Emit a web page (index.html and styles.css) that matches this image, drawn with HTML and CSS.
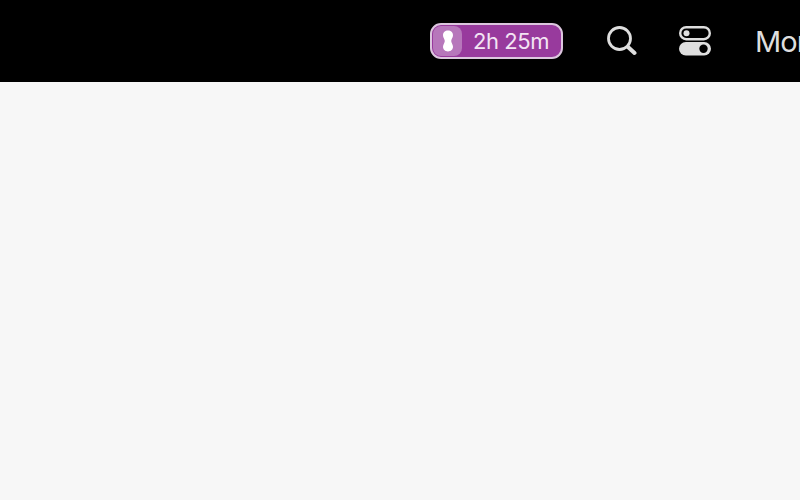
FILE: index.html
```html
<!DOCTYPE html>
<html lang="en">
<head>
	<meta charset="UTF-8">
	<title>Document</title>
	<link rel="stylesheet" href="styles.css">
</head>
<body>
	<div class="hdr">
		<div class="pill">
			<span class="pill-ic">
				<svg width="12" height="22" viewBox="0 0 12 22">
					<path fill="#fff" d="M6,0.5C8.9,0.5 11,2.6 11,5.2C11,7.6 9.2,9.2 9.2,11C9.2,12.8 11,14.4 11,16.8C11,19.4 8.9,21.5 6,21.5C3.1,21.5 1,19.4 1,16.8C1,14.4 2.8,12.8 2.8,11C2.8,9.2 1,7.6 1,5.2C1,2.6 3.1,0.5 6,0.5Z"/>
				</svg>
			</span>
			<span class="pill-txt">2h 25m</span>
		</div>
		<svg class="ic-search" width="30" height="30" viewBox="0 0 30 30">
			<circle cx="12.5" cy="12.5" r="11" fill="none" stroke="#dedede" stroke-width="2.8"/>
			<line x1="21" y1="21" x2="27.5" y2="27" stroke="#dedede" stroke-width="4" stroke-linecap="round"/>
		</svg>
		<svg class="ic-toggle" width="32" height="30" viewBox="0 0 32 30">
			<rect x="1.2" y="1.2" width="29.6" height="12" rx="6" fill="none" stroke="#dedede" stroke-width="2.4"/>
			<circle cx="7.5" cy="7.2" r="3" fill="#dedede"/>
			<rect x="0" y="16" width="32" height="13.6" rx="6.8" fill="#dedede"/>
			<circle cx="24.5" cy="22.8" r="4.2" fill="#000"/>
		</svg>
		<span class="more">More</span>
	</div>
	<div class="main"></div>
</body>
</html>
```
FILE: styles.css
```css
html,body{
	width: 100%;
	height: 100%;
	padding: 0px;
	margin: 0px;
	overflow: hidden;
	font-family: Inter, "Liberation Sans", sans-serif;
}
body{
	display: flex;
	flex-direction: column;
	background: #f7f7f7;
}
.hdr{
	background: #000;
	height: 82px;
	display: flex;
	align-items: center;
	padding-left: 430px;
	white-space: nowrap;
	overflow: hidden;
	flex-shrink: 0;
}
.pill{
	box-sizing: border-box;
	width: 133px;
	height: 36px;
	background: #983a9d;
	border: 2px solid #dcc6de;
	border-radius: 11px;
	display: flex;
	align-items: center;
	flex-shrink: 0;
}
.pill-ic{
	width: 29px;
	height: 30px;
	margin-left: 1px;
	background: #b777bb;
	border-radius: 8px;
	display: flex;
	align-items: center;
	justify-content: center;
}
.pill-txt{
	margin-left: 11px;
	color: #f3e4f4;
	font-size: 22px;
	letter-spacing: -0.45px;
}
.ic-search{
	margin-left: 44px;
	flex-shrink: 0;
}
.ic-toggle{
	margin-left: 42px;
	flex-shrink: 0;
}
.more{
	margin-left: 44px;
	color: #dedede;
	font-size: 29px;
	letter-spacing: -0.9px;
}
.main{
	flex: 1;
}
```
